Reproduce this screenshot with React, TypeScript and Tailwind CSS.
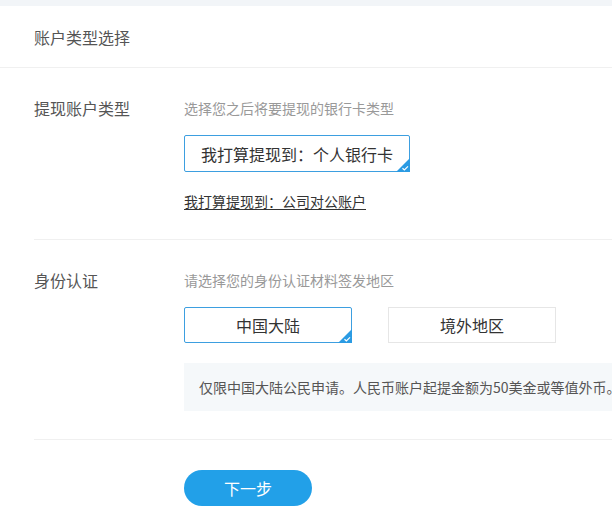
import { type ReactNode } from 'react';

const FONT = { fontFamily: '"Microsoft YaHei", "Noto Sans CJK SC", "Noto Sans", sans-serif' };

function CornerCheck() {
  return (
    <svg className="absolute -right-px -bottom-px" width="14" height="14" viewBox="0 0 14 14">
      <polygon points="14,0 14,14 0,14" fill="#2b9be3" />
      <path d="M6.5 10.2 L8.4 12 L12 8.4" fill="none" stroke="#fff" strokeWidth="1.2" />
    </svg>
  );
}

function Option({ label, selected, className }: { label: string; selected?: boolean; className: string }) {
  return (
    <div
      className={
        'relative flex items-center justify-center text-[16px] text-[#333] bg-white ' +
        className +
        (selected ? ' border border-[#3d9fe0] rounded-[2px]' : ' border border-[#e6e6e6]')
      }
    >
      {label}
      {selected && <CornerCheck />}
    </div>
  );
}

function Row({ label, children }: { label: string; children: ReactNode }) {
  return (
    <div className="ml-[34px] flex border-b border-[#f0f0f0] pt-[28px] pb-[28px]">
      <div className="w-[150px] shrink-0 text-[16px] leading-[24px] text-[#555]">{label}</div>
      <div className="flex flex-col items-start">{children}</div>
    </div>
  );
}

export default function App() {
  return (
    <div className="w-full min-h-[520px] bg-white overflow-hidden" style={FONT}>
      <div className="h-[6px] bg-[#f2f5f8]" />
      <div className="h-[62px] flex items-center px-[34px] border-b border-[#f0f0f0] text-[16px] text-[#555]">
        账户类型选择
      </div>

      <Row label="提现账户类型">
        <div className="text-[14px] leading-[24px] text-[#999]">选择您之后将要提现的银行卡类型</div>
        <Option label="我打算提现到：个人银行卡" selected className="mt-[15px] h-[37px] px-[16px]" />
        <a className="mt-[19px] text-[14px] leading-[20px] text-[#333] underline underline-offset-2 cursor-pointer">
          我打算提现到：公司对公账户
        </a>
      </Row>

      <Row label="身份认证">
        <div className="text-[14px] leading-[24px] text-[#999]">请选择您的身份认证材料签发地区</div>
        <div className="mt-[15px] flex gap-[36px]">
          <Option label="中国大陆" selected className="w-[168px] h-[36px]" />
          <Option label="境外地区" className="w-[168px] h-[36px]" />
        </div>
        <div className="mt-[20px] h-[48px] w-[460px] flex items-center pl-[15px] bg-[#f5f8fa] text-[14px] text-[#555] whitespace-nowrap">
          仅限中国大陆公民申请。人民币账户起提金额为50美金或等值外币。
        </div>
      </Row>

      <div className="pl-[184px] pt-[30px]">
        <button
          type="button"
          className="w-[128px] h-[36px] rounded-full bg-[#22a0e8] text-white text-[16px] cursor-pointer"
        >
          下一步
        </button>
      </div>
    </div>
  );
}
